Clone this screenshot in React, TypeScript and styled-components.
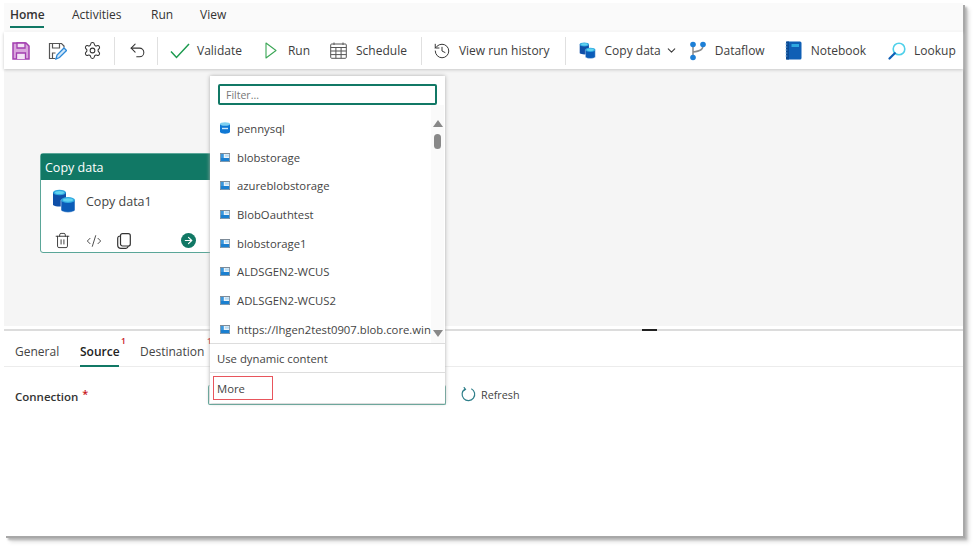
import React from "react";
import styled, { createGlobalStyle } from "styled-components";
import { Settings, Undo2, History, ChevronDown, Trash2, CodeXml, ArrowRight } from "lucide-react";

const Global = createGlobalStyle`
  html, body { margin: 0; padding: 0; background: #fff; }
  body { font-family: "Open Sans", "Noto Sans", "Liberation Sans", sans-serif; color: #333; overflow: hidden; }
  #root { width: 976px; height: 549px; }
`;

const Page = styled.div`
  width: 976px; height: 549px; padding: 3px 0 0 4px; box-sizing: border-box;
`;
const Frame = styled.div`
  position: relative; width: 959px; height: 533px; background: #fff;
  display: flex; flex-direction: column;
  box-shadow: 2px 2px 0 #a8a8a8, 4px 4px 2px #b5b5b5, 6px 6px 4px #dedede;
`;
const TopTabs = styled.div`
  height: 28px; background: #fafafa; display: flex; padding-left: 6px; flex: none;
`;
const TopTab = styled.div<{ $w: number; $active?: boolean }>`
  position: relative; width: ${p => p.$w}px; font-size: 12px; line-height: 24px; color: #333;
  font-weight: ${p => (p.$active ? 600 : 400)};
  &::after {
    content: ""; position: absolute; left: 0; top: 23px; height: 2px; width: 34px;
    background: ${p => (p.$active ? "#117865" : "transparent")};
  }
`;
const Toolbar = styled.div`
  position: relative; height: 37px; flex: none; margin-top: 1px; background: #fff; display: flex; align-items: center;
  padding-left: 8px; box-shadow: 0 1px 3px #c8c8c8; z-index: 1;
`;
const Sep = styled.div<{ $l: number; $r: number }>`
  width: 1px; height: 28px; background: #e0e0e0; margin: 0 ${p => p.$r}px 0 ${p => p.$l}px; flex: none;
`;
const Tool = styled.div<{ $ml?: number; $gap?: number }>`
  display: flex; align-items: center; gap: ${p => p.$gap ?? 9}px; margin-left: ${p => p.$ml ?? 0}px;
  font-size: 12px; color: #3d3d3d; white-space: nowrap; flex: none;
  & > svg { flex: none; display: block; }
`;
const Canvas = styled.div`
  position: relative; height: 257px; flex: none; background: #f5f5f5;
`;
const Card = styled.div`
  position: absolute; left: 36px; top: 84px; width: 180px; height: 100px; box-sizing: border-box;
  background: #fff; border: 1px solid #5aa698; border-radius: 3px; display: flex; flex-direction: column;
`;
const CardHead = styled.div`
  height: 26px; background: #117865; color: #fff; font-size: 12.5px; line-height: 27px; padding-left: 4px; flex: none;
`;
const CardBody = styled.div`
  display: flex; align-items: center; gap: 10px; padding: 9px 0 0 11px; font-size: 12.5px; color: #444;
`;
const CardActions = styled.div`
  display: flex; align-items: center; gap: 15px; padding: 19px 0 0 13px; color: #333;
  & > svg { flex: none; }
`;
const GoDot = styled.div`
  width: 15px; height: 15px; border-radius: 50%; background: #117865; color: #fff; margin-left: 35px;
  display: flex; align-items: center; justify-content: center;
`;
const Splitter = styled.div`
  height: 2px; background: #dcdcdc; margin-top: 3px; flex: none; display: flex;
`;
const Grip = styled.div`
  width: 15px; height: 2px; background: #222; margin-left: 638px;
`;
const PanelTabs = styled.div`
  height: 35px; flex: none; border-bottom: 1px solid #ececec; display: flex; padding-left: 11px;
`;
const PanelTab = styled.div<{ $w: number; $active?: boolean }>`
  position: relative; width: ${p => p.$w}px; font-size: 12px; line-height: 42px; height: 35px;
  color: ${p => (p.$active ? "#222" : "#444")}; font-weight: ${p => (p.$active ? 600 : 400)};
  &::after {
    content: ""; position: absolute; left: 0; bottom: -1px; height: 2px; width: 39px;
    background: ${p => (p.$active ? "#117865" : "transparent")};
  }
`;
const Badge = styled.span<{ $l: number }>`
  position: absolute; left: ${p => p.$l}px; top: 5px; font-size: 8.5px; line-height: 10px; color: #c8161d; font-weight: 600;
`;
const FormRow = styled.div`
  display: flex; align-items: center; padding: 19px 0 0 11px; height: 20px;
`;
const Label = styled.div`
  width: 193px; font-size: 11.5px; font-weight: 600; color: #333; flex: none;
  & > span { color: #c8161d; margin-left: 1px; font-size: 11px; position: relative; top: -3px; }
`;
const SelectBox = styled.div`
  width: 238px; height: 20px; box-sizing: border-box; border: 1px solid #5aa698; border-top: none; border-radius: 2px; flex: none;
  margin-bottom: 2px;
`;
const Refresh = styled.div`
  display: flex; align-items: center; gap: 5px; margin: 0 0 3px 15px; font-size: 10.8px; color: #444;
`;
const Popup = styled.div`
  position: absolute; left: 206px; top: 73px; width: 235px; height: 327px; background: #fff; z-index: 5;
  box-shadow: 0 0 4px #aaa; display: flex; flex-direction: column;
`;
const FilterWrap = styled.div`
  padding: 8px 8px 0 8px; flex: none;
`;
const FilterInput = styled.div`
  height: 21px; box-sizing: border-box; border: 2px solid #117865; border-radius: 2px; width: 219px;
  font-size: 10.5px; line-height: 19px; padding-left: 6px; color: #777;
`;
const ListArea = styled.div`
  position: relative; height: 238px; overflow: hidden; flex: none; padding-top: 9px; box-sizing: border-box;
`;
const Row = styled.div`
  height: 28.7px; display: flex; align-items: center; gap: 7px; padding-left: 10px; width: 222px;
  font-size: 11.3px; color: #444; white-space: nowrap;
  & > svg { flex: none; }
`;
const Scrollbar = styled.div`
  position: absolute; right: 1px; top: 0; height: 238px; width: 13px; background: #fafafa;
`;
const ArrowUp = styled.div`
  position: absolute; left: 1.5px; top: 15px; width: 0; height: 0;
  border-left: 5px solid transparent; border-right: 5px solid transparent; border-bottom: 7px solid #888;
`;
const ArrowDown = styled.div`
  position: absolute; left: 1.5px; bottom: 6px; width: 0; height: 0;
  border-left: 5px solid transparent; border-right: 5px solid transparent; border-top: 7px solid #888;
`;
const Thumb = styled.div`
  position: absolute; left: 3px; top: 29px; width: 7px; height: 15px; border-radius: 4px; background: #888;
`;
const FootRow = styled.div<{ $h: number }>`
  height: ${p => p.$h}px; flex: none; border-top: 1px solid #ddd; display: flex; align-items: center; padding-left: 7px;
  font-size: 11.3px; color: #444; position: relative; box-sizing: border-box;
`;
const RedBox = styled.div`
  position: absolute; left: 3px; top: 3px; width: 60px; height: 24px; border: 1px solid #e8555c; box-sizing: border-box;
`;

const SaveIcon = () => (
  <svg width="18" height="18" viewBox="0 0 18 18" fill="none">
    <path d="M1 1h13l3 3v13H1z" fill="#d9a6dd" stroke="#a33fb0" strokeWidth="1.5" />
    <path d="M5 1h8v5H5z" fill="#f3e3f5" stroke="#a33fb0" strokeWidth="1.3" />
    <path d="M4.500 17v-6h9v6" fill="#f3e3f5" stroke="#a33fb0" strokeWidth="1.3" />
  </svg>
);
const SaveAsIcon = () => (
  <svg width="19" height="18" viewBox="0 0 19 18" fill="none">
    <path d="M7.500 16.500H1.500V1.500h12l2.500 2.500v1.500" stroke="#555" strokeWidth="1.2" />
    <path d="M4.500 1.500v4.500h7V1.500M4.500 16v-5h3" stroke="#555" strokeWidth="1.2" />
    <path d="M8 17l1-4 7-7 2.500 2.500-7 7z" fill="#cfe6f8" stroke="#2b88d8" strokeWidth="1.3" />
  </svg>
);
const CheckIcon = () => (
  <svg width="20" height="16" viewBox="0 0 20 16" fill="none">
    <path d="M1 8.500l5.500 6L19 1" stroke="#1c9a4f" strokeWidth="1.5" />
  </svg>
);
const RunIcon = () => (
  <svg width="12" height="17" viewBox="0 0 12 17" fill="none">
    <path d="M1 1l10 7.500L1 16z" stroke="#3aa655" strokeWidth="1.1" strokeLinejoin="round" />
  </svg>
);
const CalIcon = () => (
  <svg width="17" height="17" viewBox="0 0 17 17" fill="none" stroke="#555" strokeWidth="1">
    <rect x="0.700" y="2" width="15.600" height="14.300" rx="1" />
    <path d="M0.700 5.500h15.600M0.700 9h15.600M0.700 12.600h15.600M5.900 5.500v10.800M11.100 5.500v10.800M4 0.500v2.500M13 0.500v2.500" />
  </svg>
);
const DbPair = ({ s }: { s: number }) => (
  <svg width={s} height={s} viewBox="0 0 24 24">
    <path d="M1 3h13v13c-3 2-10 2-13 0z" fill="#0f4fa8" />
    <ellipse cx="7.500" cy="3.500" rx="6.500" ry="2.800" fill="#2fa8e0" />
    <ellipse cx="7.500" cy="3.500" rx="4.500" ry="1.600" fill="#61d3f0" />
    <path d="M9 11h14v10.500c-3 2.500-11 2.500-14 0z" fill="#0b5cb8" stroke="#fff" strokeWidth="0.500" />
    <ellipse cx="16" cy="11" rx="7" ry="3" fill="#2fa8e0" />
    <ellipse cx="16" cy="11" rx="5" ry="1.700" fill="#61d3f0" />
  </svg>
);
const DataflowIcon = () => (
  <svg width="18" height="20" viewBox="0 0 18 20" fill="none">
    <path d="M4 4v12M14 4c0 5-3 6-10 7" stroke="#8a8a8a" strokeWidth="1.500" />
    <circle cx="4" cy="3.500" r="2.800" fill="#1d7fd6" />
    <circle cx="14" cy="3.500" r="2.800" fill="#1d7fd6" />
    <circle cx="4" cy="16.500" r="2.800" fill="#1d7fd6" />
  </svg>
);
const NotebookIcon = () => (
  <svg width="17" height="19" viewBox="0 0 17 19">
    <rect x="1" y="0.500" width="15.500" height="18" rx="1.500" fill="#0f5fb5" />
    <path d="M1 0.500h3v18H1z" fill="#0a4a94" />
    <rect x="6.500" y="3" width="7.500" height="3" fill="#2fa8e0" />
    <path d="M0.300 3h2M0.300 6h2M0.300 9h2M0.300 12h2M0.300 15h2" stroke="#7fb3e0" strokeWidth="0.900" />
  </svg>
);
const LookupIcon = () => (
  <svg width="18" height="18" viewBox="0 0 18 18" fill="none">
    <circle cx="11" cy="7" r="5.800" fill="#fff" stroke="#4fd0ea" strokeWidth="1.600" />
    <path d="M6.800 11.200L1.500 16.500" stroke="#0f5fb5" strokeWidth="2.200" strokeLinecap="round" />
  </svg>
);
const SqlIcon = () => (
  <svg width="10" height="12" viewBox="0 0 10 12">
    <path d="M0 2v8c1 2.200 9 2.200 10 0V2z" fill="#0f78d4" />
    <ellipse cx="5" cy="2" rx="5" ry="1.800" fill="#7fd0f0" />
    <path d="M2 6.500h6" stroke="#cfe9fb" strokeWidth="1.400" />
  </svg>
);
const BlobIcon = () => (
  <svg width="10" height="9" viewBox="0 0 10 9">
    <rect width="10" height="9" fill="#7d8b98" />
    <rect x="0.800" y="1" width="8.400" height="7.200" fill="#eef3f7" />
    <rect x="0.800" y="1" width="3" height="4" fill="#3b97dc" />
    <rect x="0.800" y="5" width="8.400" height="3.200" fill="#1a7fd0" />
    <rect x="5" y="1.500" width="4" height="2.200" fill="#b5dcf5" />
  </svg>
);
const CopyIcon = () => (
  <svg width="14" height="16" viewBox="0 0 14 16" fill="none" stroke="#333" strokeWidth="1.200">
    <rect x="3.500" y="0.700" width="9.800" height="12.300" rx="2" />
    <path d="M3.500 3C1.500 3 0.700 4 0.700 5.500v6.500c0 2 1.300 3.300 3.300 3.300h5c1.300 0 2-0.700 2.300-2.300" />
  </svg>
);
const RefreshIcon = () => (
  <svg width="15" height="15" viewBox="0 0 15 15" fill="none" stroke="#2f7f8a" strokeWidth="1.200">
    <path d="M10.300 1.700a6.300 6.300 0 1 1-6.300 0.300" />
    <path d="M2.800 0.200L4.500 2.300 2.200 4" />
  </svg>
);

const items: [string, boolean][] = [
  ["pennysql", true],
  ["blobstorage", false],
  ["azureblobstorage", false],
  ["BlobOauthtest", false],
  ["blobstorage1", false],
  ["ALDSGEN2-WCUS", false],
  ["ADLSGEN2-WCUS2", false],
  ["https://lhgen2test0907.blob.core.wind", false],
];

export default function App() {
  return (
    <Page>
      <Global />
      <Frame>
        <TopTabs>
          <TopTab $w={62} $active>Home</TopTab>
          <TopTab $w={79}>Activities</TopTab>
          <TopTab $w={49}>Run</TopTab>
          <TopTab $w={40}>View</TopTab>
        </TopTabs>
        <Toolbar>
          <Tool><SaveIcon /></Tool>
          <Tool $ml={18}><SaveAsIcon /></Tool>
          <Tool $ml={16}><Settings size={19} strokeWidth={1.3} color="#333" /></Tool>
          <Sep $l={12} $r={13} />
          <Tool><Undo2 size={19} strokeWidth={1.3} color="#333" /></Tool>
          <Sep $l={10} $r={12} />
          <Tool $gap={7}><CheckIcon />Validate</Tool>
          <Tool $ml={23} $gap={11}><RunIcon />Run</Tool>
          <Tool $ml={20}><CalIcon />Schedule</Tool>
          <Sep $l={14} $r={11} />
          <Tool $gap={8}><History size={18} strokeWidth={1.3} color="#333" />View run history</Tool>
          <Sep $l={15} $r={13} />
          <Tool><DbPair s={17} />Copy data<ChevronDown size={13} style={{ marginLeft: -5 }} /></Tool>
          <Tool $ml={11} $gap={8}><DataflowIcon />Dataflow</Tool>
          <Tool $ml={20}><NotebookIcon />Notebook</Tool>
          <Tool $ml={22} $gap={8}><LookupIcon />Lookup</Tool>
        </Toolbar>
        <Canvas>
          <Card>
            <CardHead>Copy data</CardHead>
            <CardBody><DbPair s={24} />Copy data1</CardBody>
            <CardActions>
              <Trash2 size={17} strokeWidth={1.3} />
              <CodeXml size={16} strokeWidth={1.3} />
              <CopyIcon />
              <GoDot><ArrowRight size={11} strokeWidth={2.4} /></GoDot>
            </CardActions>
          </Card>
        </Canvas>
        <Splitter><Grip /></Splitter>
        <PanelTabs>
          <PanelTab $w={65}>General</PanelTab>
          <PanelTab $w={60} $active>Source<Badge $l={41}>1</Badge></PanelTab>
          <PanelTab $w={80}>Destination<Badge $l={67}>1</Badge></PanelTab>
        </PanelTabs>
        <FormRow>
          <Label>Connection <span>*</span></Label>
          <SelectBox />
          <Refresh><RefreshIcon />Refresh</Refresh>
        </FormRow>
        <Popup>
          <FilterWrap><FilterInput>Filter...</FilterInput></FilterWrap>
          <ListArea>
            <Scrollbar>
              <ArrowUp />
              <Thumb />
              <ArrowDown />
            </Scrollbar>
            {items.map(([name, sql]) => (
              <Row key={name}>{sql ? <SqlIcon /> : <BlobIcon />}{name}</Row>
            ))}
          </ListArea>
          <FootRow $h={29}>Use dynamic content</FootRow>
          <FootRow $h={31}><RedBox />More</FootRow>
        </Popup>
      </Frame>
    </Page>
  );
}
